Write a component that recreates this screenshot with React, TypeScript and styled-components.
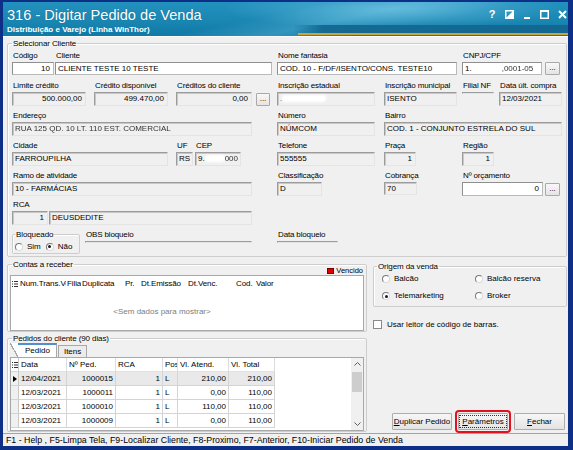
import React from "react";
import styled, { createGlobalStyle } from "styled-components";

const GlobalStyle = createGlobalStyle`
  * { box-sizing: border-box; }
  html, body { margin: 0; padding: 0; background: #0d2f86; }
  body { font-family: "Liberation Sans", Arial, sans-serif; color: #000; }
`;

const Window = styled.div`
  width: 573px;
  height: 450px;
  display: flex;
  flex-direction: column;
  padding: 2px 5px 4px 3px;
  background: #0d2f86;
  overflow: hidden;
`;

const TitleBar = styled.div`
  flex: none;
  height: 34px;
  display: flex;
  justify-content: space-between;
  align-items: flex-start;
  padding: 4px 1px 0 4px;
  color: #fff;
  background:
    linear-gradient(#c9a53c, #c9a53c) 295px 31px / 270px 2px no-repeat,
    linear-gradient(90deg, rgba(20, 106, 147, 0) 0, #146a93 30px, #136892 100%) 290px 23px / 275px 8px no-repeat,
    radial-gradient(ellipse 170px 20px at 390px 7px, rgba(140, 215, 240, 0.5), rgba(140, 215, 240, 0)),
    linear-gradient(168deg, rgba(255, 255, 255, 0) 45%, rgba(110, 195, 228, 0.35) 58%, rgba(255, 255, 255, 0) 72%),
    linear-gradient(180deg, #2391be 0%, #1a86b2 55%, #0f79a6 100%);
`;

const TitleBlock = styled.div`
  display: flex;
  flex-direction: column;
`;

const TitleText = styled.div`
  font-size: 14.6px;
  line-height: 18px;
  white-space: nowrap;
  text-shadow: 0 0 1px rgba(0, 40, 70, 0.4);
`;

const SubTitle = styled.div`
  font-size: 8px;
  font-weight: bold;
  line-height: 10px;
  margin-top: 1px;
  white-space: nowrap;
`;

const Controls = styled.div`
  display: flex;
  align-items: center;
  gap: 9px;
  margin-top: 4px;
  height: 9px;
`;

const HelpGlyph = styled.span`
  font-size: 11px;
  font-weight: bold;
  line-height: 9px;
  width: 8px;
  text-align: center;
`;

const Body = styled.div`
  flex: 1;
  min-height: 0;
  display: flex;
  flex-direction: column;
  background: #f0f0f0;
  border-top: 1px solid #fff;
`;

const Content = styled.div`
  flex: 1;
  min-height: 0;
  display: flex;
  flex-direction: column;
  padding: 2px 1px 1px 4px;
`;

const GroupBox = styled.fieldset`
  margin: 0;
  min-width: 0;
  border: 1px solid #cdcdcd;
  border-radius: 2px;
  box-shadow: inset 1px 1px 0 #fff;
`;

const Legend = styled.legend<{ $ml?: number }>`
  font-size: 8px;
  line-height: 9px;
  padding: 0 1px;
  margin-left: ${(p) => p.$ml ?? 0}px;
  white-space: nowrap;
  letter-spacing: -0.1px;
`;

const MainGroup = styled(GroupBox)`
  padding: 3px 3px 2px 4px;
`;

const Row = styled.div<{ $mt?: number }>`
  display: flex;
  align-items: flex-start;
  margin-top: ${(p) => p.$mt ?? 0}px;
`;

const Field = styled.div<{ $w: number; $ml?: number }>`
  flex: none;
  width: ${(p) => p.$w}px;
  margin-left: ${(p) => p.$ml ?? 0}px;
  display: flex;
  flex-direction: column;
`;

const Label = styled.div`
  height: 9px;
  font-size: 8px;
  line-height: 9px;
  letter-spacing: -0.15px;
  margin: 0 0 2px 1px;
  white-space: nowrap;
`;

const Line = styled.div<{ $gap?: number }>`
  display: flex;
  align-items: flex-end;
  gap: ${(p) => p.$gap ?? 3}px;
`;

const Input = styled.div<{ $white?: boolean; $right?: boolean; $h?: number }>`
  flex: 1;
  min-width: 0;
  height: ${(p) => p.$h ?? 14}px;
  padding: 0 ${(p) => (p.$right ? 3 : 2)}px;
  font-size: 8px;
  line-height: ${(p) => (p.$h ?? 14) - 2}px;
  text-align: ${(p) => (p.$right ? "right" : "left")};
  white-space: nowrap;
  overflow: hidden;
  background: ${(p) => (p.$white ? "#fff" : "#f0f0f0")};
  border: 1px solid;
  border-color: ${(p) =>
    p.$white ? "#8f8f8f #b9b9b9 #b9b9b9 #8f8f8f" : "#9c9c9c #e4e4e4 #e4e4e4 #9c9c9c"};
  box-shadow: ${(p) => (p.$white ? "none" : "inset 1px 1px 0 #c8c8c8")};
`;

const Smudge = styled.span<{ $w: number }>`
  display: inline-block;
  width: ${(p) => p.$w}px;
  height: 7px;
  vertical-align: middle;
  background: #fff;
  border-radius: 3px;
  filter: blur(0.8px);
`;

const Blurry = styled.span`
  filter: blur(0.5px);
  color: #333;
`;

const DotsButton = styled.div<{ $w?: number }>`
  flex: none;
  width: ${(p) => p.$w ?? 15}px;
  height: 13px;
  font-size: 8px;
  line-height: 9px;
  text-align: center;
  border: 1px solid #a9a9a9;
  border-radius: 1px;
  background: linear-gradient(#f8f8f8, #e4e4e4);
`;

const SmallGroup = styled(GroupBox)`
  width: 68px;
  height: 24px;
  padding: 1px 2px 0 2px;
  display: flex;
  align-items: center;
`;

const Option = styled.label<{ $ml?: number }>`
  display: flex;
  align-items: center;
  gap: 4px;
  margin-left: ${(p) => p.$ml ?? 0}px;
  font-size: 8px;
  line-height: 10px;
  height: 10px;
  white-space: nowrap;
`;

const Radio = styled.span<{ $on?: boolean }>`
  flex: none;
  width: 8px;
  height: 8px;
  border-radius: 50%;
  border: 1px solid;
  border-color: #7a7a7a #dadada #dadada #7a7a7a;
  background: #fff;
  display: flex;
  align-items: center;
  justify-content: center;

  &::after {
    content: "";
    width: 3px;
    height: 3px;
    border-radius: 50%;
    background: ${(p) => (p.$on ? "#1a1a1a" : "transparent")};
  }
`;

const CheckBox = styled.span`
  flex: none;
  width: 9px;
  height: 9px;
  background: #fff;
  border: 1px solid #8a8a8a;
`;

const Lower = styled.div`
  flex: 1;
  min-height: 0;
  display: flex;
  gap: 6px;
  margin-top: 3px;
`;

const LeftCol = styled.div`
  width: 360px;
  flex: none;
  display: flex;
  flex-direction: column;
`;

const RightCol = styled.div`
  flex: 1;
  display: flex;
  flex-direction: column;
  padding-top: 2px;
`;

const ContasGroup = styled(GroupBox)`
  padding: 0 2px 0 2px;
`;

const VencidoRow = styled.div`
  margin-top: -3px;
  height: 9px;
  display: flex;
  justify-content: flex-end;
  align-items: center;
  gap: 2px;
  font-size: 7.5px;
  padding-right: 1px;
`;

const RedMark = styled.span`
  width: 7px;
  height: 6px;
  background: #e00000;
  border: 1px solid #7a0000;
`;

const ContasGrid = styled.div`
  height: 56px;
  display: flex;
  flex-direction: column;
  background: #fff;
  border: 1px solid #a8a8a8;
`;

const ContasHead = styled.div`
  display: grid;
  grid-template-columns: 8px 47px 15px 43px 16px 47px 48px 20px 58px;
  height: 16px;
  align-items: center;
`;

const HeadText = styled.div`
  min-width: 0;
  font-size: 8px;
  line-height: 10px;
  letter-spacing: -0.1px;
  white-space: nowrap;
  overflow: hidden;
  padding-left: 1px;
`;

const EmptyText = styled.div`
  width: 302px;
  flex: 1;
  display: flex;
  align-items: center;
  justify-content: center;
  font-size: 8px;
  color: #7d7d7d;
`;

const PedidosGroup = styled(GroupBox)`
  flex: 1;
  min-height: 0;
  margin-top: 2px;
  padding: 0 2px 0 2px;
  display: flex;
  flex-direction: column;
`;

const TabStrip = styled.div`
  height: 14px;
  flex: none;
  display: flex;
  align-items: flex-end;
  padding-left: 8px;
`;

const Tab = styled.div<{ $active?: boolean }>`
  position: relative;
  height: ${(p) => (p.$active ? 14 : 12)}px;
  padding: 0 ${(p) => (p.$active ? 6 : 5)}px 0 ${(p) => (p.$active ? 7 : 5)}px;
  font-size: 8px;
  line-height: 11px;
  background: ${(p) => (p.$active ? "#fff" : "#ececec")};
  border: 1px solid #a8a8a8;
  border-top: ${(p) => (p.$active ? "2px solid #4f8fcf" : "1px solid #a8a8a8")};
  border-bottom: none;
  border-left: ${(p) => (p.$active ? "none" : "1px solid #a8a8a8")};
  margin-left: ${(p) => (p.$active ? 0 : 1)}px;

  &::before {
    content: ${(p) => (p.$active ? '""' : "none")};
    position: absolute;
    left: -8px;
    top: -2px;
    width: 8px;
    height: 14px;
    background: linear-gradient(
      to top right,
      transparent calc(50% - 0.6px),
      #a8a8a8 calc(50% - 0.6px),
      #a8a8a8 calc(50% + 0.6px),
      #fff calc(50% + 0.6px)
    );
  }
`;

const Grid = styled.div`
  flex: 1;
  min-height: 0;
  display: flex;
  background: #fff;
  border: 1px solid #a8a8a8;
  overflow: hidden;
`;

const GridBody = styled.div`
  flex: 1;
  display: flex;
  flex-direction: column;
`;

const GridRow = styled.div<{ $current?: boolean }>`
  display: grid;
  grid-template-columns: 8px 48px 49px 47px 15px 51px 46px;
  height: 14px;
  flex: none;
  width: 264px;
  background: ${(p) => (p.$current ? "#e9e9e9" : "#fff")};
`;

const Cell = styled.div<{ $right?: boolean }>`
  min-width: 0;
  font-size: 8px;
  line-height: 13px;
  padding: 0 2px;
  text-align: ${(p) => (p.$right ? "right" : "left")};
  white-space: nowrap;
  overflow: hidden;
  border-right: 1px solid #d4d4d4;
  border-bottom: 1px solid #d4d4d4;
`;

const HeadCell = styled(Cell)`
  background: #fff;
  border-bottom-color: #e0e0e0;
  border-right-color: #dcdcdc;
`;

const Indicator = styled.div<{ $head?: boolean }>`
  display: flex;
  align-items: center;
  justify-content: center;
  background: ${(p) => (p.$head ? "#fff" : "#f0f0f0")};
  border-right: 1px solid #c8c8c8;
  border-bottom: 1px solid #d4d4d4;
`;

const ContasIndicator = styled.div`
  height: 16px;
  display: flex;
  align-items: center;
  justify-content: center;
`;

const ScrollBar = styled.div`
  width: 12px;
  flex: none;
  display: flex;
  flex-direction: column;
  background: #f0f0f0;
`;

const ScrollArrow = styled.div`
  height: 12px;
  display: flex;
  align-items: center;
  justify-content: center;
`;

const Thumb = styled.div`
  height: 20px;
  margin: 2px 1px 0 1px;
  background: #cdcdcd;
`;

const Track = styled.div`
  flex: 1;
`;

const OrigemGroup = styled(GroupBox)`
  padding: 3px 4px 5px 8px;
`;

const OptionGrid = styled.div`
  display: grid;
  grid-template-columns: 93px auto;
  row-gap: 7px;
`;

const CheckRow = styled.label`
  display: flex;
  align-items: center;
  gap: 5px;
  height: 10px;
  margin-top: 12px;
  font-size: 8px;
`;

const Buttons = styled.div`
  margin-top: auto;
  display: flex;
  justify-content: flex-end;
  gap: 6px;
  padding: 0 2px 2px 0;
`;

const Button = styled.div<{ $w: number; $highlight?: boolean }>`
  width: ${(p) => p.$w}px;
  height: 17px;
  display: flex;
  align-items: center;
  justify-content: center;
  font-size: 8px;
  white-space: nowrap;
  border: 1px solid #adadad;
  border-radius: 1px;
  background: linear-gradient(#f7f7f7, #e3e3e3);
  outline: ${(p) => (p.$highlight ? "2px solid #e3101d" : "none")};
  outline-offset: 1px;
`;

const Focus = styled.span`
  padding: 1px 2px;
  border: 1px dotted #333;
  line-height: 9px;
`;

const StatusBar = styled.div`
  flex: none;
  height: 13px;
  padding-left: 3px;
  font-size: 8.8px;
  line-height: 12px;
  white-space: nowrap;
  overflow: hidden;
  background: #f0f0f0;
  border-top: 1px solid #a3a3a3;
`;

const ColumnsIcon = () => (
  <svg width="6" height="6" viewBox="0 0 6 6">
    <g fill="#333">
      <rect x="0" y="0" width="1" height="1" />
      <rect x="0" y="2.5" width="1" height="1" />
      <rect x="0" y="5" width="1" height="1" />
      <rect x="2" y="0" width="4" height="1" />
      <rect x="2" y="2.5" width="4" height="1" />
      <rect x="2" y="5" width="4" height="1" />
    </g>
  </svg>
);

const pedidos = [
  ["12/04/2021", "1000015", "1", "L", "210,00", "210,00"],
  ["12/03/2021", "1000011", "1", "L", "0,00", "110,00"],
  ["12/03/2021", "1000010", "1", "L", "110,00", "110,00"],
  ["12/03/2021", "1000009", "1", "L", "0,00", "110,00"],
];

const contasCols = ["Num.Trans.Venda", "Filial", "Duplicata", "Pr.", "Dt.Emissão", "Dt.Venc.", "Cod.", "Valor"];

function App() {
  return (
    <>
      <GlobalStyle />
      <Window>
        <TitleBar>
          <TitleBlock>
            <TitleText>316 - Digitar Pedido de Venda</TitleText>
            <SubTitle>Distribuição e Varejo (Linha WinThor)</SubTitle>
          </TitleBlock>
          <Controls>
            <HelpGlyph>?</HelpGlyph>
            <svg width="9" height="9" viewBox="0 0 9 9">
              <rect x="0.75" y="0.75" width="7.5" height="7.5" fill="none" stroke="#fff" strokeWidth="1.5" />
              <path d="M1 8 L8 1 L8 8 Z" fill="#fff" />
            </svg>
            <svg width="8" height="9" viewBox="0 0 8 9">
              <rect x="1" y="7" width="6" height="2" fill="#fff" />
            </svg>
            <svg width="9" height="9" viewBox="0 0 9 9">
              <rect x="0.75" y="0.75" width="7.5" height="7.5" fill="none" stroke="#fff" strokeWidth="1.5" />
              <rect x="0" y="0" width="9" height="2" fill="#fff" />
            </svg>
            <svg width="9" height="9" viewBox="0 0 9 9">
              <path d="M1 1 L8 8 M8 1 L1 8" stroke="#fff" strokeWidth="2" />
            </svg>
          </Controls>
        </TitleBar>

        <Body>
          <Content>
            <MainGroup>
              <Legend>Selecionar Cliente</Legend>
              <Row>
                <Field $w={42}>
                  <Label>Código</Label>
                  <Input $white $right $h={13}>10</Input>
                </Field>
                <Field $w={217} $ml={1}>
                  <Label>Cliente</Label>
                  <Input $white $h={13}>CLIENTE TESTE 10 TESTE</Input>
                </Field>
                <Field $w={180} $ml={5}>
                  <Label>Nome fantasia</Label>
                  <Input $white $h={13}>COD. 10 - F/DF/ISENTO/CONS. TESTE10</Input>
                </Field>
                <Field $w={98} $ml={5}>
                  <Label>CNPJ/CPF</Label>
                  <Line>
                    <Input $white $h={13}>
                      1.<Smudge $w={30} /><Blurry>,0001-05</Blurry>
                    </Input>
                    <DotsButton>...</DotsButton>
                  </Line>
                </Field>
              </Row>

              <Row $mt={6}>
                <Field $w={74}>
                  <Label>Limite crédito</Label>
                  <Input $right>500.000,00</Input>
                </Field>
                <Field $w={74} $ml={8}>
                  <Label>Crédito disponível</Label>
                  <Input $right>499.470,00</Input>
                </Field>
                <Field $w={94} $ml={8}>
                  <Label>Créditos do cliente</Label>
                  <Line $gap={4}>
                    <Input $right>0,00</Input>
                    <DotsButton $w={14}>...</DotsButton>
                  </Line>
                </Field>
                <Field $w={98} $ml={7}>
                  <Label>Inscrição estadual</Label>
                  <Input>
                    <Blurry>.</Blurry>
                    <Smudge $w={44} />
                  </Input>
                </Field>
                <Field $w={73} $ml={9}>
                  <Label>Inscrição municipal</Label>
                  <Input>ISENTO</Input>
                </Field>
                <Field $w={32} $ml={5}>
                  <Label>Filial NF</Label>
                  <Input />
                </Field>
                <Field $w={63} $ml={5}>
                  <Label>Data últ. compra</Label>
                  <Input>12/03/2021</Input>
                </Field>
              </Row>

              <Row $mt={5}>
                <Field $w={240}>
                  <Label>Endereço</Label>
                  <Input>
                    <Blurry>RUA 125 QD. 10 LT. 110 EST. COMERCIAL</Blurry>
                  </Input>
                </Field>
                <Field $w={98} $ml={25}>
                  <Label>Número</Label>
                  <Input>NÚMCOM</Input>
                </Field>
                <Field $w={178} $ml={9}>
                  <Label>Bairro</Label>
                  <Input>COD. 1 - CONJUNTO ESTRELA DO SUL</Input>
                </Field>
              </Row>

              <Row $mt={5}>
                <Field $w={156}>
                  <Label>Cidade</Label>
                  <Input>FARROUPILHA</Input>
                </Field>
                <Field $w={17} $ml={8}>
                  <Label>UF</Label>
                  <Input>RS</Input>
                </Field>
                <Field $w={46} $ml={2}>
                  <Label>CEP</Label>
                  <Input>
                    9.<Smudge $w={20} /><Blurry>000</Blurry>
                  </Input>
                </Field>
                <Field $w={98} $ml={36}>
                  <Label>Telefone</Label>
                  <Input>555555</Input>
                </Field>
                <Field $w={32} $ml={9}>
                  <Label>Praça</Label>
                  <Input $right>1</Input>
                </Field>
                <Field $w={32} $ml={46}>
                  <Label>Região</Label>
                  <Input $right>1</Input>
                </Field>
              </Row>

              <Row $mt={5}>
                <Field $w={240}>
                  <Label>Ramo de atividade</Label>
                  <Input>10 - FARMÁCIAS</Input>
                </Field>
                <Field $w={45} $ml={25}>
                  <Label>Classificação</Label>
                  <Input>D</Input>
                </Field>
                <Field $w={33} $ml={62}>
                  <Label>Cobrança</Label>
                  <Input $h={13}>70</Input>
                </Field>
                <Field $w={98} $ml={45}>
                  <Label>Nº orçamento</Label>
                  <Line $gap={2}>
                    <Input $white $right>0</Input>
                    <DotsButton>...</DotsButton>
                  </Line>
                </Field>
              </Row>

              <Row $mt={4}>
                <Field $w={36}>
                  <Label>RCA</Label>
                  <Input $right>1</Input>
                </Field>
                <Field $w={203} $ml={1}>
                  <Label />
                  <Input>DEUSDEDITE</Input>
                </Field>
              </Row>

              <Row $mt={5}>
                <SmallGroup>
                  <Legend>Bloqueado</Legend>
                  <Option>
                    <Radio />
                    Sim
                  </Option>
                  <Option $ml={5}>
                    <Radio $on />
                    Não
                  </Option>
                </SmallGroup>
                <Field $w={167} $ml={5}>
                  <Label>OBS bloqueio</Label>
                  <Input $h={13} />
                </Field>
                <Field $w={61} $ml={25}>
                  <Label>Data bloqueio</Label>
                  <Input $h={13} />
                </Field>
              </Row>
            </MainGroup>

            <Lower>
              <LeftCol>
                <ContasGroup>
                  <Legend $ml={2}>Contas a receber</Legend>
                  <VencidoRow>
                    <RedMark />
                    Vencido
                  </VencidoRow>
                  <ContasGrid>
                    <ContasHead>
                      <ContasIndicator>
                        <ColumnsIcon />
                      </ContasIndicator>
                      {contasCols.map((c) => (
                        <HeadText key={c}>{c}</HeadText>
                      ))}
                    </ContasHead>
                    <EmptyText>&lt;Sem dados para mostrar&gt;</EmptyText>
                  </ContasGrid>
                </ContasGroup>

                <PedidosGroup>
                  <Legend $ml={2}>Pedidos do cliente (90 dias)</Legend>
                  <TabStrip>
                    <Tab $active>Pedido</Tab>
                    <Tab>Itens</Tab>
                  </TabStrip>
                  <Grid>
                    <GridBody>
                      <GridRow>
                        <Indicator $head>
                          <ColumnsIcon />
                        </Indicator>
                        <HeadCell>Data</HeadCell>
                        <HeadCell>Nº Ped.</HeadCell>
                        <HeadCell>RCA</HeadCell>
                        <HeadCell>Posição</HeadCell>
                        <HeadCell>Vl. Atend.</HeadCell>
                        <HeadCell>Vl. Total</HeadCell>
                      </GridRow>
                      {pedidos.map((r, i) => (
                        <GridRow key={r[1]} $current={i === 0}>
                          <Indicator>
                            {i === 0 && (
                              <svg width="4" height="6" viewBox="0 0 4 6">
                                <path d="M0 0 L4 3 L0 6 Z" fill="#000" />
                              </svg>
                            )}
                          </Indicator>
                          <Cell>{r[0]}</Cell>
                          <Cell $right>{r[1]}</Cell>
                          <Cell $right>{r[2]}</Cell>
                          <Cell>{r[3]}</Cell>
                          <Cell $right>{r[4]}</Cell>
                          <Cell $right>{r[5]}</Cell>
                        </GridRow>
                      ))}
                    </GridBody>
                    <ScrollBar>
                      <ScrollArrow>
                        <svg width="7" height="4" viewBox="0 0 7 4">
                          <path d="M0.5 3.5 L3.5 0.5 L6.5 3.5" fill="none" stroke="#606060" strokeWidth="1" />
                        </svg>
                      </ScrollArrow>
                      <Thumb />
                      <Track />
                      <ScrollArrow>
                        <svg width="7" height="4" viewBox="0 0 7 4">
                          <path d="M0.5 0.5 L3.5 3.5 L6.5 0.5" fill="none" stroke="#606060" strokeWidth="1" />
                        </svg>
                      </ScrollArrow>
                    </ScrollBar>
                  </Grid>
                </PedidosGroup>
              </LeftCol>

              <RightCol>
                <OrigemGroup>
                  <Legend $ml={-5}>Origem da venda</Legend>
                  <OptionGrid>
                    <Option>
                      <Radio />
                      Balcão
                    </Option>
                    <Option>
                      <Radio />
                      Balcão reserva
                    </Option>
                    <Option>
                      <Radio $on />
                      Telemarketing
                    </Option>
                    <Option>
                      <Radio />
                      Broker
                    </Option>
                  </OptionGrid>
                </OrigemGroup>
                <CheckRow>
                  <CheckBox />
                  Usar leitor de código de barras.
                </CheckRow>
                <Buttons>
                  <Button $w={60}>
                    <span>
                      <u>D</u>uplicar Pedido
                    </span>
                  </Button>
                  <Button $w={50} $highlight>
                    <Focus>
                      <u>P</u>arâmetros
                    </Focus>
                  </Button>
                  <Button $w={51}>
                    <span>
                      <u>F</u>echar
                    </span>
                  </Button>
                </Buttons>
              </RightCol>
            </Lower>
          </Content>
          <StatusBar>
            F1 - Help , F5-Limpa Tela, F9-Localizar Cliente, F8-Proximo, F7-Anterior, F10-Iniciar Pedido de Venda
          </StatusBar>
        </Body>
      </Window>
    </>
  );
}

export default App;
